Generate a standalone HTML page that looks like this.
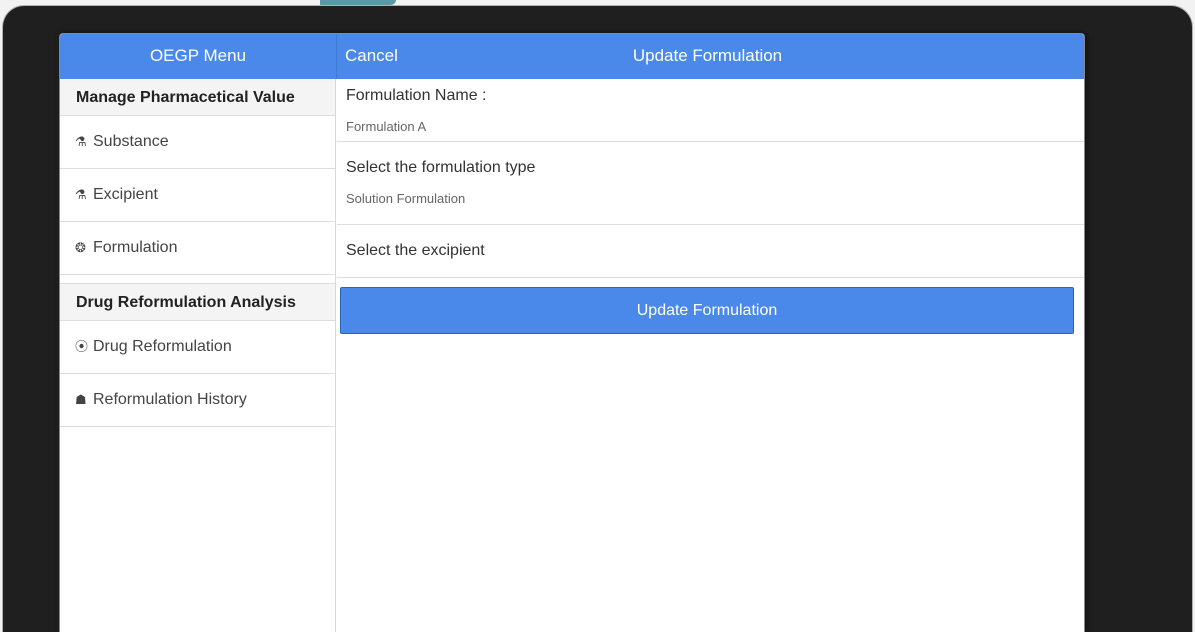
<!DOCTYPE html>
<html><head><style>
*{margin:0;padding:0;box-sizing:border-box}
html,body{width:1195px;height:632px;overflow:hidden}
body{background:#f2f2f2;font-family:"Liberation Sans",sans-serif;position:relative}
.logo{position:absolute;left:320px;top:0;width:76px;height:5px;background:#5a9aa6;border-radius:0 0 30px 4px}
.bezel{position:absolute;left:2px;top:5px;width:1191px;height:627px;background:#1f1f1f;border:1px solid #b0b0b0;border-bottom:none;border-radius:22px 22px 0 0}
.screen{position:absolute;left:59px;top:33px;width:1026px;height:599px;background:#fff;border-radius:4px 4px 0 0;box-shadow:2px 0 6px rgba(0,0,0,.5);overflow:hidden;border:1px solid #888;border-bottom:none}
.hdr{position:absolute;top:0;left:0;right:0;height:45px;background:#4a89ea;color:#fff;font-size:17px}
.side{position:absolute;left:0;top:45px;width:276px;height:560px;border-right:1px solid #d8d8d8}
.gh{height:37px;background:#f4f4f4;border-bottom:1px solid #ddd;font-weight:bold;font-size:16px;line-height:18px;color:#222;padding:10px 0 0 16px}
.it{height:53px;border-bottom:1px solid #ddd;font-size:16px;line-height:18px;color:#444;padding:17px 0 0 15px;white-space:nowrap}
.it i{font-style:normal;font-size:13px;display:inline-block;width:18px;line-height:18px;vertical-align:top}
.lbl{position:absolute;left:286px;font-size:16px;color:#333}
.sub{position:absolute;left:286px;font-size:13px;color:#666}
.div{position:absolute;left:277px;right:0;height:1px;background:#ddd}
</style></head><body>
<div class="logo"></div>
<div class="bezel"></div>
<div class="screen">
 <div class="side">
  <div class="gh">Manage Pharmacetical Value</div>
  <div class="it"><i>⚗</i>Substance</div>
  <div class="it"><i>⚗</i>Excipient</div>
  <div class="it"><i>❂</i>Formulation</div>
  <div style="height:9px;border-bottom:1px solid #ddd"></div>
  <div class="gh">Drug Reformulation Analysis</div>
  <div class="it"><i>⦿</i>Drug Reformulation</div>
  <div class="it"><i>☗</i>Reformulation History</div>
 </div>
 <div class="hdr">
  <div style="position:absolute;left:0;width:276px;top:12px;text-align:center">OEGP Menu</div>
  <div style="position:absolute;left:276px;top:0;width:1px;height:45px;background:#3f7bd6"></div>
  <div style="position:absolute;left:285px;top:12px">Cancel</div>
  <div style="position:absolute;left:277px;right:0;top:12px;text-align:center;padding-right:6px">Update Formulation</div>
 </div>
 <div class="lbl" style="top:53px">Formulation Name :</div>
 <div class="sub" style="top:85px">Formulation A</div>
 <div class="div" style="top:107px"></div>
 <div class="lbl" style="top:125px">Select the formulation type</div>
 <div class="sub" style="top:157px">Solution Formulation</div>
 <div class="div" style="top:190px"></div>
 <div class="lbl" style="top:208px">Select the excipient</div>
 <div class="div" style="top:243px"></div>
 <div style="position:absolute;left:280px;top:253px;width:734px;height:47px;background:#4a89ea;border:1px solid #2a62c0;border-radius:2px;color:#fff;font-size:16px;text-align:center;padding-top:14px">Update Formulation</div>
</div>
</body></html>
